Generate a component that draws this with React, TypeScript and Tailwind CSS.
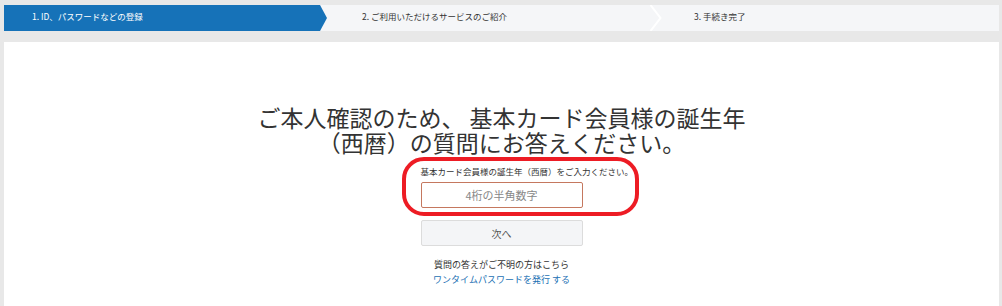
import React from "react";

const font = { fontFamily: '"Noto Sans CJK JP", "Noto Sans", sans-serif' };

export default function App() {
  return (
    <div
      className="w-[1002px] h-[306px] overflow-hidden bg-[#e8e8e8] pl-[4px] pr-[3px] pt-[5px] flex flex-col"
      style={font}
    >
      {/* Stepper */}
      <div className="h-[26px] bg-[#f5f6f8] flex items-stretch">
        <div className="w-[323px] bg-[#1672b8] text-white text-[8.5px] flex items-center pl-[28px] pb-[3px] [clip-path:polygon(0_0,calc(100%-7px)_0,100%_50%,calc(100%-7px)_100%,0_100%)]">
          1. ID、パスワードなどの登録
        </div>
        <div className="w-[335px] flex items-center justify-between text-[8.5px] text-[#333]">
          <span className="pl-[35px] pb-[3px]">2. ご利用いただけるサービスのご紹介</span>
          <svg width="12" height="26" viewBox="0 0 12 26" className="block">
            <polyline points="0.5,0 10.5,13 0.5,26" fill="none" stroke="#ffffff" strokeWidth="2" />
          </svg>
        </div>
        <div className="flex-1 flex items-center text-[8.5px] text-[#333]">
          <span className="pl-[32px] pb-[3px]">3. 手続き完了</span>
        </div>
      </div>

      {/* Panel */}
      <div className="mt-[11px] flex-1 bg-white flex flex-col items-center pt-[63px]">
        <h1 className="text-[23px] leading-[25px] text-[#333] text-center font-normal">
          <span className="block">ご本人確認のため、 基本カード会員様の誕生年</span>
          <span className="block">（西暦）の質問にお答えください。</span>
        </h1>

        <div className="relative w-[162px] mt-[10px] flex flex-col">
          <div className="text-[8.5px] leading-[12px] text-[#333] whitespace-nowrap">
            基本カード会員様の誕生年（西暦）をご入力ください。
          </div>
          <div className="mt-[5px] h-[26px] border border-[#c5785f] rounded-[2px] flex items-center justify-center text-[11px] text-[#888]">
            4桁の半角数字
          </div>
          <div className="absolute left-[-19px] top-[-8px] w-[237px] h-[59px] border-[4px] border-[#ed1c24] rounded-[22px] pointer-events-none" />
        </div>

        <div className="mt-[12px] w-[162px] h-[26px] bg-[#f4f5f7] border border-[#dcdcdc] rounded-[2px] flex items-center justify-center text-[10px] text-[#555]">
          次へ
        </div>

        <div className="mt-[11px] text-[9px] leading-[15px] text-[#333] text-center">
          質問の答えがご不明の方はこちら
        </div>
        <div className="text-[9px] leading-[15px] text-[#1a6fb3] text-center">
          ワンタイムパスワードを発行 する
        </div>
      </div>
    </div>
  );
}
